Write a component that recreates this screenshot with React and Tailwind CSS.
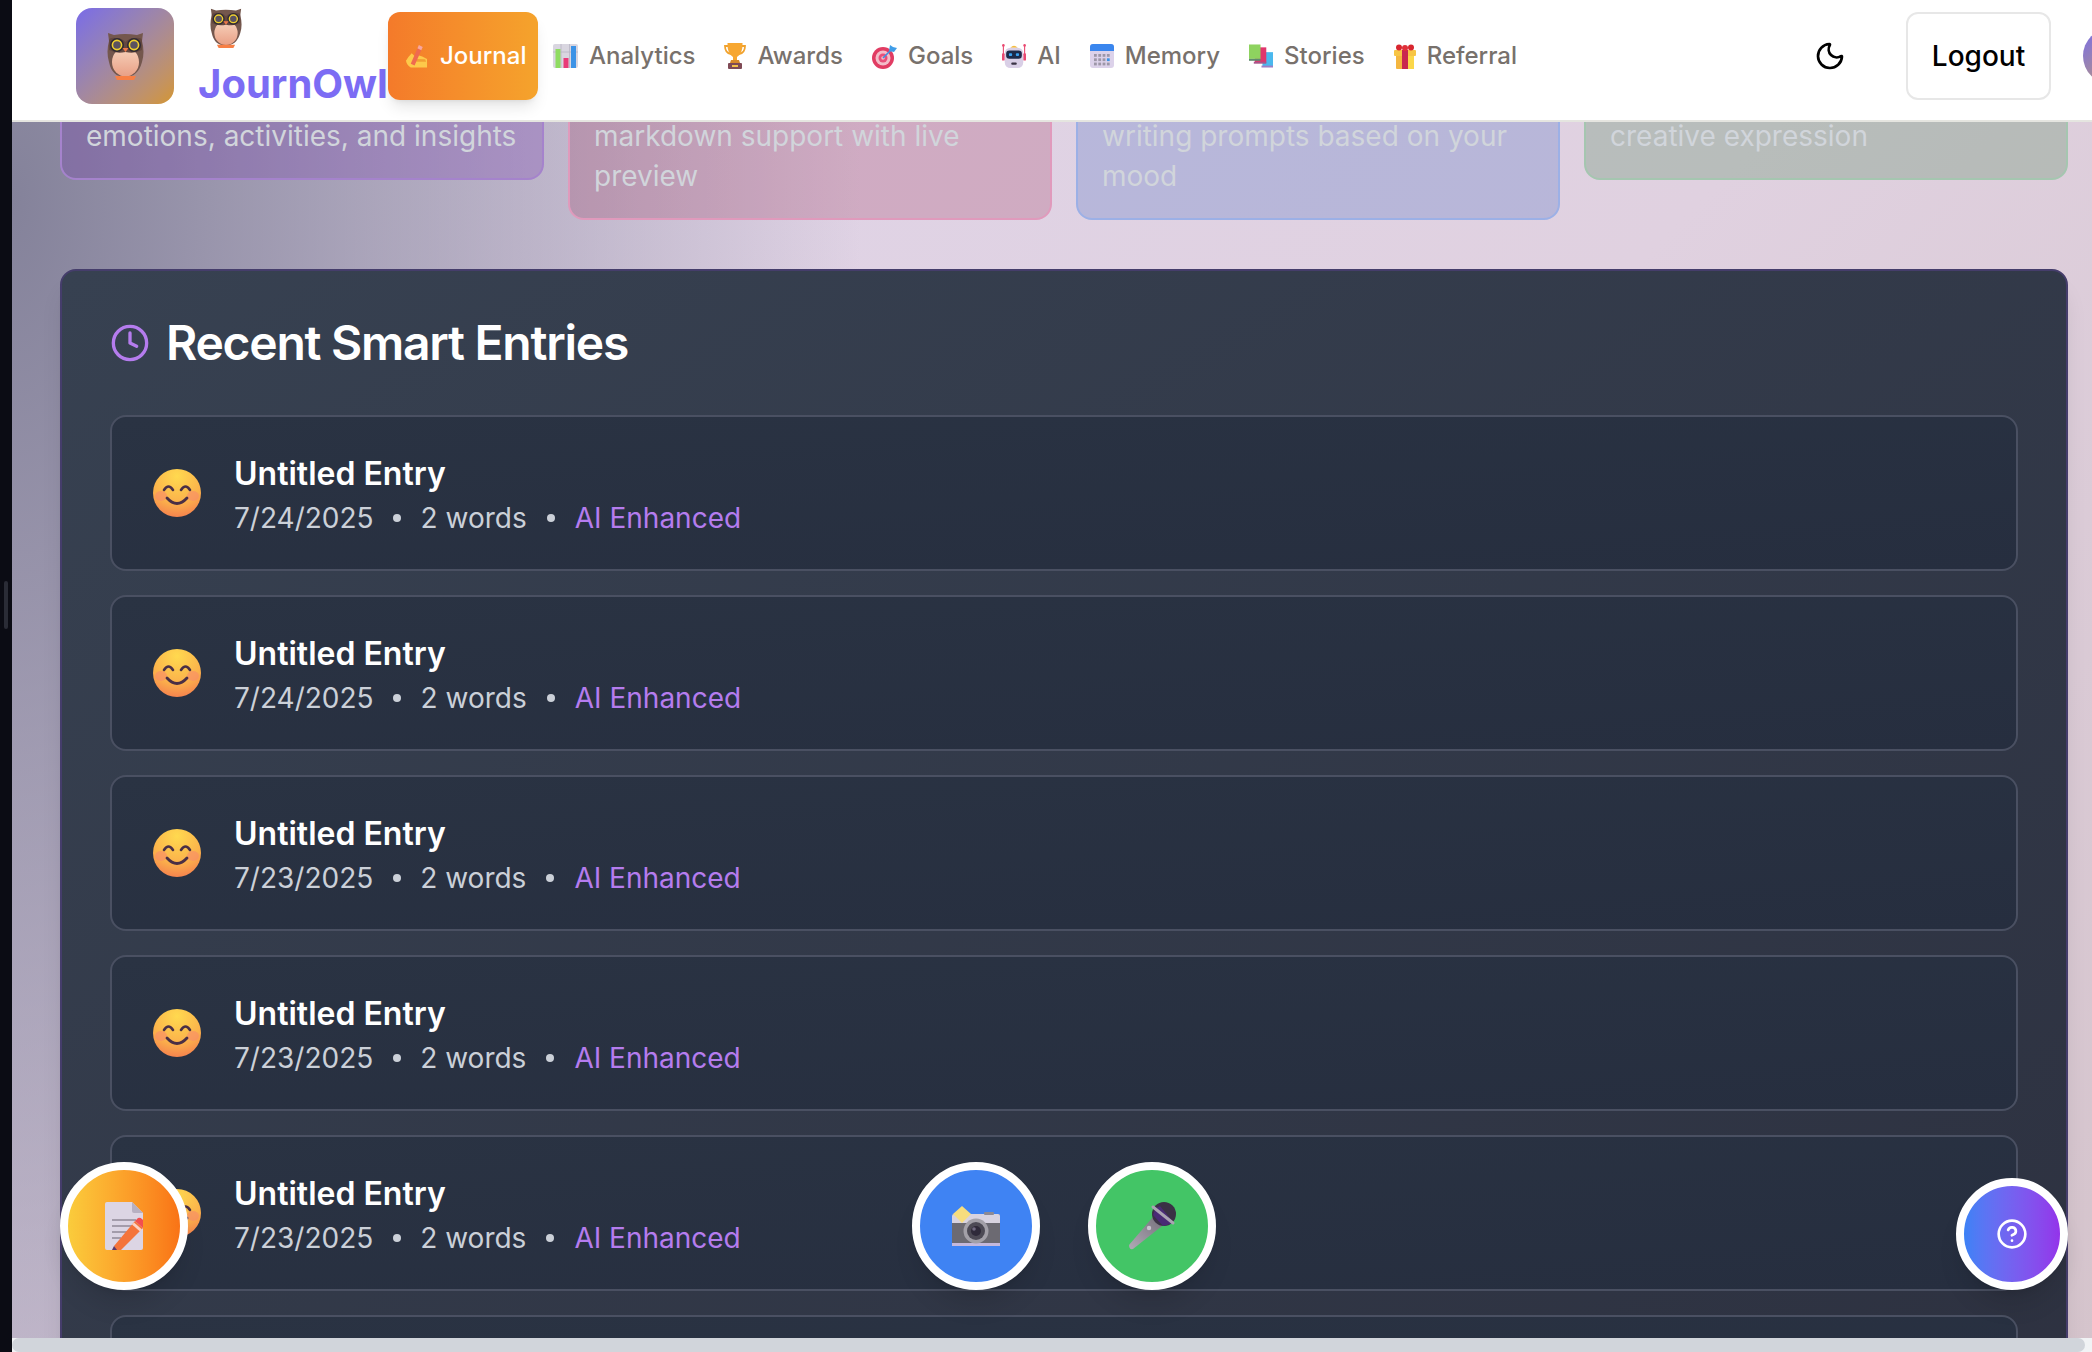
import { Clock, Moon, CircleHelp } from "lucide-react";

const entries = [
  { date: "7/24/2025" },
  { date: "7/24/2025" },
  { date: "7/23/2025" },
  { date: "7/23/2025" },
  { date: "7/23/2025" },
  { date: "7/23/2025" },
];

const cards = [
  { lines: ["emotions, activities, and insights"], tone: "bg-[#6e2cb0]/25 border-[#a583cc]" },
  { lines: ["markdown support with live", "preview"], tone: "bg-[#900d3e]/20 border-[#e09abc]" },
  { lines: ["writing prompts based on your", "mood"], tone: "bg-[#194bb9]/20 border-[#9cb0e6]" },
  { lines: ["creative expression"], tone: "bg-[#5e8f67]/30 border-[#a5c6b0]" },
];

function Owl({ className }) {
  return (
    <svg viewBox="0 0 37 48" preserveAspectRatio="none" className={className}>
      <defs>
        <linearGradient id="owlBelly" x1="0" y1="0" x2="0" y2="1">
          <stop offset="0" stopColor="#f7d3bd" />
          <stop offset="1" stopColor="#e99f85" />
        </linearGradient>
      </defs>
      <path d="M1 1 L7 3 Q18 1 30 3 L36 1 L35 9 Q38 20 35 30 Q31 45 18 45 Q5 45 2 30 Q-1 20 2 9 Z" fill="#74574d" />
      <ellipse cx="18.5" cy="30" rx="13.500" ry="14.5" fill="url(#owlBelly)" />
      <path d="M2 9 Q2 5 9 6 Q15 6 18.5 10 Q22 6 28 6 Q35 5 35 9 L35 18 Q28 22 18.5 20 Q9 22 2 18 Z" fill="#644840" />
      <circle cx="10" cy="13" r="7" fill="#2f2a33" />
      <circle cx="27" cy="13" r="7" fill="#2f2a33" />
      <circle cx="10" cy="13" r="4.6" fill="#5a5260" stroke="#f0cf2e" strokeWidth="1.6" />
      <circle cx="27" cy="13" r="4.6" fill="#5a5260" stroke="#f0cf2e" strokeWidth="1.6" />
      <path d="M15.5 16 L21.5 16 L18.5 20 Z" fill="#f0794a" />
      <path d="M8 44 H29 L27 48 H10 Z" fill="#f77f45" />
    </svg>
  );
}

function WritingHand() {
  return (
    <svg viewBox="0 0 24 24" className="h-6 w-[23px]">
      <path d="M1 17 Q3 13 7 9 L10 12 L13 11 Q18 12 23 15 V24 H6 Q2 22 1 17Z" fill="#fdc94a" />
      <path d="M11 15 L21 15.500 L22 18 L12 18Z" fill="#f2a032" />
      <path d="M6 20 L13 4 L17 6 L10 22 Z" fill="#ef6a4f" />
      <path d="M13 4 L14.500 0.500 L18.500 2.500 L17 6Z" fill="#f7a6a0" />
    </svg>
  );
}

function BarChart() {
  return (
    <svg viewBox="0 0 25 24" className="h-6 w-[25px]">
      <rect width="25" height="24" rx="2" fill="#d9d6e0" />
      <path d="M8 0V24M16.500 0V24M0 8H25" stroke="#b9b5c4" strokeWidth="0.8" />
      <rect x="2.500" y="5" width="5" height="19" fill="#8fdc62" />
      <rect x="10.500" y="14" width="5" height="10" fill="#e93a78" />
      <rect x="18" y="2" width="5" height="22" fill="#3c93e6" />
    </svg>
  );
}

function Trophy() {
  return (
    <svg viewBox="0 0 22 26" className="h-[26px] w-[22px]">
      <path d="M4 3 H1 Q1 10 7 11 M18 3 H21 Q21 10 15 11" fill="none" stroke="#f0a22e" strokeWidth="1.8" />
      <path d="M3.500 0 H18.500 Q19 10 13 14 V17 H9 V14 Q3 10 3.500 0Z" fill="#f7a731" />
      <path d="M7 17 H15 L16 20 H6 Z" fill="#d9892a" />
      <rect x="4" y="20" width="14" height="6" rx="1" fill="#7f4a55" />
      <rect x="8" y="22" width="6" height="2" fill="#f5c04a" />
    </svg>
  );
}

function Target() {
  return (
    <svg viewBox="0 0 25 25" className="h-[25px] w-[25px]">
      <circle cx="11" cy="14" r="11" fill="#e13c63" />
      <circle cx="11" cy="14" r="7.500" fill="#f3bdc9" />
      <circle cx="11" cy="14" r="4.500" fill="#e8507a" />
      <circle cx="11" cy="14" r="1.800" fill="#f3bdc9" />
      <path d="M11 14 L20 5" stroke="#3f8fe0" strokeWidth="1.600" />
      <path d="M17 7 L18 1 L21 3 L25 4 L22 8 Z" fill="#3f9de8" />
    </svg>
  );
}

function Robot() {
  return (
    <svg viewBox="0 0 26 26" className="h-[26px] w-6">
      <path d="M1.500 1 V13 M24.500 1 V13" stroke="#e94a72" strokeWidth="1.200" />
      <circle cx="1.500" cy="1.500" r="1.400" fill="#e94a72" />
      <circle cx="24.500" cy="1.500" r="1.400" fill="#e94a72" />
      <rect x="0" y="10" width="3" height="8" rx="1" fill="#e94a72" />
      <rect x="23" y="10" width="3" height="8" rx="1" fill="#e94a72" />
      <path d="M9 4 Q13 0 17 4Z" fill="#f5bd40" />
      <rect x="3" y="4" width="20" height="22" rx="6" fill="#d9cfe6" />
      <rect x="4.500" y="7" width="17" height="9" rx="3.500" fill="#1d2a4a" />
      <rect x="7.500" y="10" width="3.500" height="3" rx="1" fill="#3aa0f0" />
      <rect x="15" y="10" width="3.500" height="3" rx="1" fill="#3aa0f0" />
      <rect x="10" y="20" width="6" height="2.600" rx="1.200" fill="#3a3345" />
    </svg>
  );
}

function Calendar() {
  const cells = [];
  for (let r = 0; r < 3; r++) {
    for (let c = 0; c < 4; c++) {
      const on = r === 1 && c === 3;
      cells.push(<rect key={r + "-" + c} x={4 + c * 4.300} y={10 + r * 4.300} width="2.800" height="2.800" fill={on ? "#3c93e6" : "#9d97a8"} />);
    }
  }
  return (
    <svg viewBox="0 0 24 24" className="h-6 w-6">
      <rect width="24" height="24" rx="3" fill="#dcd2ea" />
      <path d="M0 7 V3 Q0 0 3 0 H21 Q24 0 24 3 V7Z" fill="#3a86ee" />
      {cells}
    </svg>
  );
}

function Books() {
  return (
    <svg viewBox="0 0 25 24" className="h-6 w-6">
      <rect x="14" y="8" width="11" height="15" fill="#4ab8ee" />
      <rect x="13" y="22" width="12" height="2" fill="#9a80c8" />
      <rect x="6" y="3" width="12" height="16" fill="#e0366c" />
      <rect x="5" y="18" width="13" height="2" fill="#a8568a" />
      <rect x="0" y="0" width="12" height="15" fill="#8ed35f" />
      <rect x="0" y="15" width="12" height="2" fill="#5f8c70" />
    </svg>
  );
}

function Gift() {
  return (
    <svg viewBox="0 0 22 25" className="h-[25px] w-[22px]">
      <rect x="2" y="8" width="18" height="17" rx="1" fill="#f4b63f" />
      <rect x="14" y="8" width="6" height="17" fill="#fbd74a" />
      <rect x="0" y="6" width="22" height="6" rx="1" fill="#f7c545" />
      <rect x="8" y="6" width="6" height="19" fill="#c9284f" />
      <circle cx="5" cy="3.500" r="3" fill="#d8262f" />
      <circle cx="17" cy="3.500" r="3" fill="#d8262f" />
      <circle cx="11" cy="4" r="3" fill="#e0303a" />
    </svg>
  );
}

function Smile() {
  return (
    <svg viewBox="0 0 48 48" className="h-12 w-12 shrink-0">
      <defs>
        <radialGradient id="smileFace" cx="0.5" cy="0.15" r="0.95">
          <stop offset="0" stopColor="#ffd94f" />
          <stop offset="0.6" stopColor="#fbb04b" />
          <stop offset="1" stopColor="#f4744f" />
        </radialGradient>
      </defs>
      <circle cx="24" cy="24" r="24" fill="url(#smileFace)" />
      <ellipse cx="8" cy="27" rx="6" ry="5" fill="#f88a6a" opacity="0.6" />
      <ellipse cx="40" cy="27" rx="6" ry="5" fill="#f88a6a" opacity="0.6" />
      <path d="M11 21 Q15.500 14 20 21 M28 21 Q32.500 14 37 21" fill="none" stroke="#4a2f45" strokeWidth="2.600" strokeLinecap="round" />
      <path d="M14 29 Q24 40 34 29" fill="none" stroke="#4a2f45" strokeWidth="2.800" strokeLinecap="round" />
    </svg>
  );
}

function Memo() {
  return (
    <svg viewBox="0 0 38 48" className="h-12 w-[38px]">
      <path d="M2 0 H27 L38 11 V46 Q38 48 36 48 H2 Q0 48 0 46 V2 Q0 0 2 0Z" fill="#dcd5e4" />
      <path d="M27 0 L38 11 H29 Q27 11 27 9Z" fill="#b7b0c2" />
      <path d="M7 18 H31 M7 24 H31 M7 30 H24 M7 36 H16" stroke="#a39cab" strokeWidth="1.800" />
      <path d="M11 48 L9 44 L30 19 L38 26 L16 48 Z" fill="#f4743a" />
      <path d="M30 19 L33 16 Q35 15 37 17 L40 20 Q41 22 39 24 L38 26Z" fill="#f24f4f" />
      <path d="M27 22.500 L35 29.500 L37 27.500 L29 20.500Z" fill="#fbd3c4" />
      <path d="M9 44 L7 48 H12Z" fill="#5a3a6a" />
    </svg>
  );
}

function Camera() {
  return (
    <svg viewBox="0 0 48 40" className="h-[40px] w-12">
      <rect x="0" y="8" width="48" height="32" rx="2" fill="#6c6a72" />
      <path d="M0 10 Q0 8 2 8 H46 Q48 8 48 10 V17 H0Z" fill="#d8d3e0" />
      <rect x="32" y="6" width="10" height="3" rx="1" fill="#8d8a94" />
      <rect x="0" y="37" width="48" height="3" fill="#c4b8dc" />
      <circle cx="24" cy="25" r="12.500" fill="#a3a0a8" />
      <circle cx="24" cy="25" r="9" fill="#4d4a55" />
      <circle cx="24" cy="25" r="5" fill="#2f2a3a" />
      <circle cx="22" cy="23" r="1.800" fill="#716a80" />
      <path d="M10 0 L19 8 L10 17 L1 8Z" fill="#f7dd7e" />
    </svg>
  );
}

function Mic() {
  return (
    <svg viewBox="0 0 48 48" className="h-12 w-12">
      <defs>
        <linearGradient id="micBody" x1="0" y1="1" x2="1" y2="0">
          <stop offset="0" stopColor="#b0aab6" />
          <stop offset="1" stopColor="#76717c" />
        </linearGradient>
      </defs>
      <path d="M1 43 L25 15 L34 24 L5 47 Q1 48 1 43Z" fill="url(#micBody)" />
      <circle cx="21" cy="26" r="2.200" fill="#c9c4d0" />
      <circle cx="36" cy="12" r="12" fill="#3a3245" />
      <path d="M25 13 L35 24 Q44 22 45 20 L32 4 Q27 6 25 13Z" fill="#4b2a7a" opacity="0.9" />
      <path d="M25 5 L45 21" stroke="#aaa4b2" strokeWidth="3" strokeLinecap="round" />
    </svg>
  );
}

function NavItem({ icon, label, active }) {
  if (active) {
    return (
      <button className="flex h-[88px] w-[150px] shrink-0 items-center gap-3 rounded-xl bg-gradient-to-r from-[#f47a2a] to-[#f5a32c] pl-[17px] text-[24px] font-medium text-white shadow-lg">
        {icon}
        {label}
      </button>
    );
  }
  return (
    <a className="flex shrink-0 items-center gap-[11px] px-[14px] text-[24px] font-medium text-[#78716c]">
      {icon}
      {label}
    </a>
  );
}

function EntryRow({ date }) {
  return (
    <div className="flex h-[156px] shrink-0 items-center gap-[33px] rounded-2xl border-2 border-[#4a5062] bg-gradient-to-br from-[#2a3343] to-[#262e3f] pl-[41px]">
      <Smile />
      <div className="pt-[5px]">
        <h3 className="text-[32px] leading-[44px] font-semibold text-white">Untitled Entry</h3>
        <p className="flex items-center text-[28px] leading-[44px] text-[#cbd0d8]">
          <span>{date}</span>
          <span className="mx-[19.500px] h-2 w-2 rounded-full bg-[#cbd0d8]"></span>
          <span>2 words</span>
          <span className="mx-5 h-2 w-2 rounded-full bg-[#cbd0d8]"></span>
          <span className="text-[#b57cee]">AI Enhanced</span>
        </p>
      </div>
    </div>
  );
}

export default function App() {
  return (
    <div className="relative flex h-[1352px] w-full overflow-hidden font-['Inter',sans-serif]">
      <div className="flex w-3 shrink-0 items-center bg-[#0b0c14] pb-[142px]">
        <div className="ml-1 h-12 w-1 rounded bg-[#2a2c36]"></div>
      </div>

      <div className="flex min-w-0 flex-1 flex-col bg-[radial-gradient(ellipse_850px_1800px_at_0px_200px,#84829a_0%,#84829a00_100%),linear-gradient(135deg,#dfd5ea_0%,#e0d1e0_55%,#d5c4cc_100%)]">
        <header className="relative z-10 flex h-[122px] shrink-0 items-center border-b-2 border-[#e5e5e0] bg-white pt-2 pb-4">
          <div className="ml-16 flex h-24 w-[98px] shrink-0 items-center justify-center rounded-2xl bg-gradient-to-br from-[#7a6ae8] to-[#d4962a]">
            <Owl className="h-12 w-[37px]" />
          </div>
          <div className="ml-6 flex h-24 w-[190px] shrink-0 flex-col">
            <Owl className="ml-3 h-10 w-8 shrink-0" />
            <span className="mt-3 text-[40px] leading-[48px] font-bold whitespace-nowrap text-[#7c6cf4]">JournOwl</span>
          </div>
          <nav className="flex items-center gap-px">
            <NavItem active icon={<WritingHand />} label="Journal" />
            <NavItem icon={<BarChart />} label="Analytics" />
            <NavItem icon={<Trophy />} label="Awards" />
            <NavItem icon={<Target />} label="Goals" />
            <NavItem icon={<Robot />} label="AI" />
            <NavItem icon={<Calendar />} label="Memory" />
            <NavItem icon={<Books />} label="Stories" />
            <NavItem icon={<Gift />} label="Referral" />
          </nav>
          <div className="ml-auto flex items-center">
            <Moon className="h-8 w-8 text-black" strokeWidth={2} />
            <button className="ml-[60px] h-[88px] w-[145px] rounded-xl border-2 border-[#e7e7e7] bg-white text-[28px] font-medium text-black">Logout</button>
            <div className="-mr-[47px] ml-8 h-14 w-14 rounded-full bg-gradient-to-br from-[#7a6ae8] to-[#d4962a]"></div>
          </div>
        </header>

        <main className="min-h-0 flex-1 overflow-hidden pr-6 pl-12">
          <div className="-mt-[34px] grid grid-cols-4 items-start gap-6">
            {cards.map((card, i) => (
              <div key={i} className={`rounded-2xl border-2 px-6 pt-[26px] pb-[22px] text-[28px] leading-10 text-[#d1d5db] ${card.tone}`}>
                {card.lines.map((line) => (
                  <div key={line} className="whitespace-nowrap">{line}</div>
                ))}
              </div>
            ))}
          </div>

          <section className="mt-[49px] rounded-2xl border-2 border-[#453d6b] bg-gradient-to-br from-[#374151] to-[#2d3140] px-12 pt-12 shadow-xl">
            <div className="mb-12 flex h-12 items-center gap-4">
              <Clock className="h-10 w-10 text-[#b57cee]" strokeWidth={2} />
              <h2 className="text-[48px] font-semibold tracking-[-1.250px] text-white">Recent Smart Entries</h2>
            </div>
            <div className="flex flex-col gap-6">
              {entries.map((entry, i) => (
                <EntryRow key={i} date={entry.date} />
              ))}
            </div>
          </section>
        </main>

        <div className="h-[14px] shrink-0 bg-[#f1f3f5] pr-[7px]">
          <div className="h-full rounded-lg bg-[#d1d5db]"></div>
        </div>
      </div>

      <button className="fixed bottom-[62px] left-[60px] flex h-32 w-32 items-center justify-center rounded-full border-8 border-white bg-gradient-to-r from-[#facc3c] to-[#f97316] shadow-xl">
        <Memo />
      </button>
      <div className="fixed bottom-[62px] left-[912px] flex gap-12">
        <button className="flex h-32 w-32 items-center justify-center rounded-full border-8 border-white bg-[#3f83f3] shadow-xl">
          <Camera />
        </button>
        <button className="flex h-32 w-32 items-center justify-center rounded-full border-8 border-white bg-[#43c566] shadow-xl">
          <Mic />
        </button>
      </div>
      <button className="fixed right-6 bottom-[62px] flex h-28 w-28 items-center justify-center rounded-full border-8 border-white bg-gradient-to-r from-[#3b82f6] to-[#9333ea] shadow-xl">
        <CircleHelp className="h-8 w-8 text-white" strokeWidth={2} />
      </button>
    </div>
  );
}
